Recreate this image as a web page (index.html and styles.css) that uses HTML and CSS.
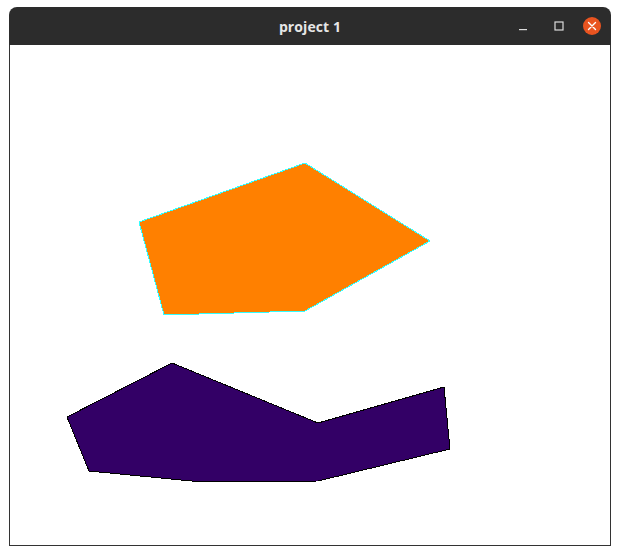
FILE: index.html
```html
<!DOCTYPE html>
<html>
<head>
<meta charset="utf-8">
<link rel="stylesheet" href="styles.css">
</head>
<body>
<div class="window">
  <div class="titlebar">
    <span class="title">project 1</span>
    <div class="controls">
      <span class="btn min"><svg width="10" height="10" viewBox="0 0 10 10"><rect x="1" y="8" width="8" height="1.2" fill="#dcdcdc"/></svg></span>
      <span class="btn max"><svg width="10" height="10" viewBox="0 0 10 10"><rect x="1" y="1" width="8" height="8" fill="none" stroke="#dcdcdc" stroke-width="1.2"/></svg></span>
      <span class="btn close"><svg width="18" height="18" viewBox="0 0 18 18"><circle cx="9" cy="9" r="9" fill="#e95420"/><path d="M5.5 5.5 L12.5 12.5 M12.5 5.5 L5.5 12.5" stroke="#fff" stroke-width="1.4" stroke-linecap="round"/></svg></span>
    </div>
  </div>
  <div class="canvas">
    <svg class="scene" width="600" height="500" viewBox="10 45 600 500">
      <polygon points="139,222 305,163 430,241 305,311 164,315" fill="#ff8000" stroke="#33ffff" stroke-width="1" shape-rendering="crispEdges"/>
      <polygon points="67,417 172,363 318,423 444,387 450,449 318,481 202,482 89,471" fill="#330066" stroke="#000000" stroke-width="1" shape-rendering="crispEdges"/>
    </svg>
  </div>
</div>
</body>
</html>
```

FILE: styles.css
```css
html, body {
  margin: 0;
  padding: 0;
  background: #ffffff;
}
body {
  width: 620px;
  height: 555px;
  overflow: hidden;
}
.window {
  margin: 7px 0 0 9px;
  width: 602px;
  display: flex;
  flex-direction: column;
}
.titlebar {
  height: 38px;
  background: #2c2c2c;
  border-radius: 8px 8px 0 0;
  display: flex;
  align-items: center;
  justify-content: center;
  position: relative;
}
.title {
  font-family: "Open Sans", "DejaVu Sans", sans-serif;
  font-weight: 700;
  font-size: 14px;
  color: #e6e6e6;
  letter-spacing: 0.1px;
}
.controls {
  position: absolute;
  right: 10px;
  top: 10px;
  display: flex;
  align-items: center;
  gap: 0;
}
.btn {
  display: flex;
  align-items: center;
  justify-content: center;
}
.btn.min { width: 10px; height: 10px; margin-right: 26px; }
.btn.max { width: 10px; height: 10px; margin-right: 19px; }
.btn.close { width: 18px; height: 18px; }
.canvas {
  height: 501px;
  border: 1px solid #333333;
  border-top: none;
  background: #ffffff;
  box-sizing: border-box;
}
.scene {
  display: block;
}
```
